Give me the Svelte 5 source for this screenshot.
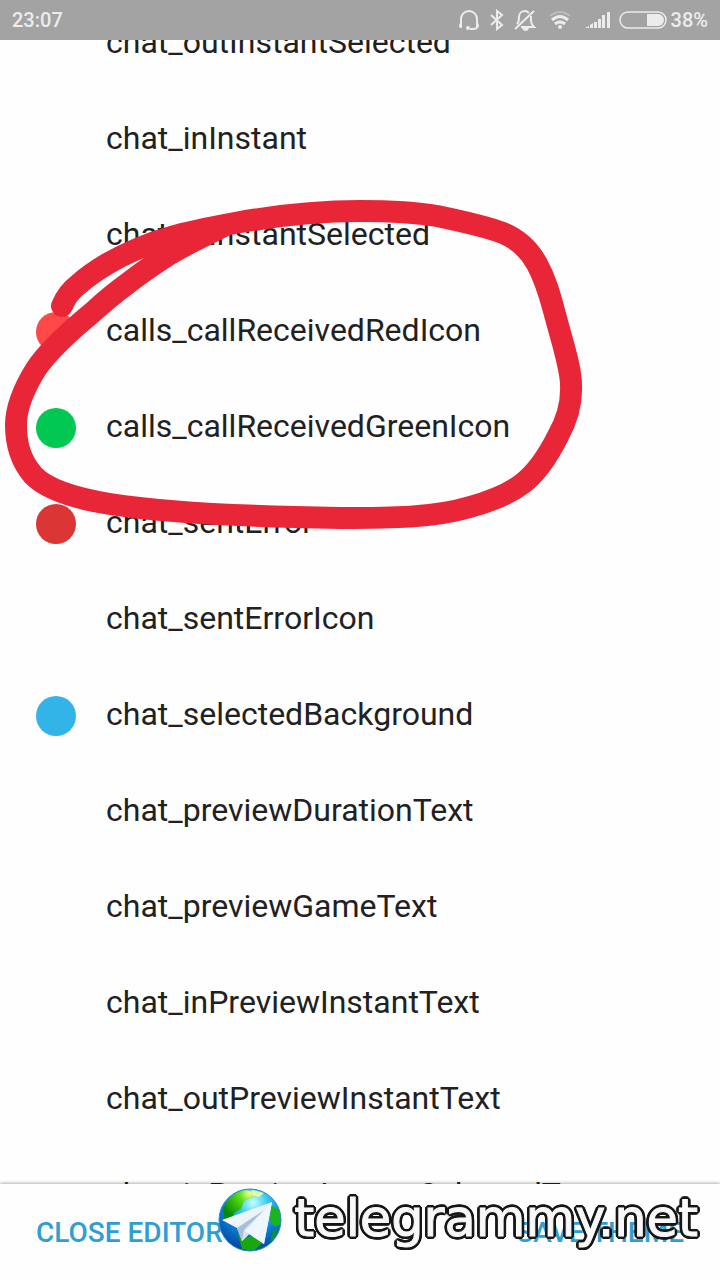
<script>
  const items = [
    { name: 'chat_outInstantSelected' },
    { name: 'chat_inInstant' },
    { name: 'chat_inInstantSelected' },
    { name: 'calls_callReceivedRedIcon', color: '#ff4848' },
    { name: 'calls_callReceivedGreenIcon', color: '#00c853' },
    { name: 'chat_sentError', color: '#db3535' },
    { name: 'chat_sentErrorIcon' },
    { name: 'chat_selectedBackground', color: '#33b4e8' },
    { name: 'chat_previewDurationText' },
    { name: 'chat_previewGameText' },
    { name: 'chat_inPreviewInstantText' },
    { name: 'chat_outPreviewInstantText' },
    { name: 'chat_inPreviewInstantSelectedText' }
  ];
</script>

<div class="screen">
  <header class="status">
    <span class="time">23:07</span>
    <div class="indicators">
      <svg width="22" height="22" viewBox="0 0 22 22" fill="none" stroke="#ececec" stroke-width="2" aria-hidden="true">
        <path d="M3 16V10a8 8 0 0 1 16 0v6M19 18c0 2-2 2-4 2h-3" />
        <path d="M1 17q0-3 3-4v6H2q-1-1-1-2zM21 17q0-3-3-4v6h2q1-1 1-2z" fill="#ececec" stroke="none" />
        <circle cx="10" cy="19" r="2" fill="#ececec" stroke="none" />
      </svg>
      <svg class="bluetooth" width="14" height="22" viewBox="0 0 14 22" fill="none" stroke="#ececec" stroke-width="2" aria-hidden="true">
        <path d="M1 6l11 10-5 4V2l5 4L1 16" />
      </svg>
      <svg class="bell" width="22" height="22" viewBox="0 0 22 22" fill="none" stroke="#ececec" stroke-width="2" aria-hidden="true">
        <path d="M3 15c2-2 2-4 2-7 0-4 3-6 6-6 2 0 3 1 4 2M17 7v5c0 3 1 4 3 6H7M1 20L20 2" />
        <path d="M8 19h7q-1 3-3.500 3T8 19z" fill="#ececec" stroke="none" />
      </svg>
      <svg class="wifi" width="22" height="20" viewBox="0 0 22 20" fill="none" stroke="#ececec" stroke-width="3" aria-hidden="true">
        <path d="M1 6q10-8 20 0" stroke="#bcbcbc" stroke-width="2" />
        <path d="M3 10q8-7 16 0M6 14q5-4 10 0" />
        <circle cx="11" cy="17" r="2" fill="#ececec" stroke="none" />
      </svg>
      <svg class="signal" width="26" height="18" viewBox="0 0 26 18" fill="#ececec" aria-hidden="true">
        <path d="M0 17l4-2v2zM5 14l3-2v5H5zM9 11h3v6H9zM13 8h3v9h-3zM17 4h3v13h-3zM22 1h3v16h-3z" />
      </svg>
      <svg class="battery" width="48" height="18" viewBox="0 0 48 18" aria-hidden="true">
        <rect x="1" y="1" width="46" height="16" rx="8" fill="none" stroke="#ececec" stroke-width="1.500" />
        <path d="M28 3h11a6 6 0 0 1 0 12H28z" fill="#ececec" />
      </svg>
      <span class="percent">38%</span>
    </div>
  </header>

  <main class="viewport">
    <ul>
      {#each items as item}
        <li>
          <button class="row">
            <span class="swatch" style:background={item.color ?? 'transparent'}></span>
            <span class="label">{item.name}</span>
          </button>
        </li>
      {/each}
    </ul>
  </main>

  <footer>
    <button class="action">CLOSE EDITOR</button>
    <button class="action">SAVE THEME</button>
    <div class="brand">
      <svg class="globe" width="64" height="64" viewBox="0 0 64 64" aria-hidden="true">
        <defs>
          <radialGradient id="sea" cx="55%" cy="22%" r="78%">
            <stop offset="0" stop-color="#c9ffff" />
            <stop offset=".3" stop-color="#35c8ef" />
            <stop offset=".65" stop-color="#087bd0" />
            <stop offset="1" stop-color="#0645a0" />
          </radialGradient>
          <radialGradient id="land" cx="80%" cy="10%" r="90%">
            <stop offset="0" stop-color="#f2ff9a" />
            <stop offset=".35" stop-color="#5cdd16" />
            <stop offset="1" stop-color="#058a0a" />
          </radialGradient>
          <linearGradient id="paper" x1="0" y1="0" x2="1" y2="1">
            <stop offset="0" stop-color="#ffffff" />
            <stop offset="1" stop-color="#d3e5f4" />
          </linearGradient>
          <clipPath id="disc"><circle cx="32" cy="32" r="31" /></clipPath>
        </defs>
        <circle cx="32" cy="32" r="31" fill="url(#sea)" />
        <g clip-path="url(#disc)">
          <path d="M5 20Q12 5 27 2l11 2-4 6-8 3-3 8-7 4-3 7-7 2z" fill="url(#land)" />
          <path d="M34 2l12 3-5 4-7-2z" fill="#e5ffa0" />
          <path d="M53 17l8 5 3 14-7 3-5-7z" fill="#19b51b" />
          <path d="M20 46l8 3 9-1 7 7-8 8-12-2z" fill="#16a80c" />
          <path d="M55 43l5-3-3 10-5 4z" fill="#129431" />
        </g>
        <circle cx="32" cy="32" r="31" fill="none" stroke="#268bd0" stroke-width="1" />
        <path d="M54 14L4 32l15 8 5 13 7-7 15 10z" fill="url(#paper)" />
        <path d="M48 21L19 40l5 13 2-11z" fill="#a9bfd6" />
        <path d="M54 14L26 42l-2 11 7-7z" fill="#d4e2f1" />
        <path d="M54 14L27 43l19 13z" fill="#eff7fe" />
      </svg>
      <span class="wordmark">telegrammy.net</span>
    </div>
  </footer>

  <svg class="scribble" width="600" height="540" viewBox="0 0 600 540" fill="none" aria-hidden="true">
    <path
      d="M62 306C66 296 71 290 79 284C88 276 97 270 107 264C128 252 149 243 171 237C191 231 213 227 235 223C279 215 320 211 360 211C387 211 414 212 437 216C461 221 485 226 503 233C520 240 530 251 537 264C547 282 551 300 556 318C562 341 571 368 571 385C572 405 567 420 558 436C549 454 538 472 522 484C506 496 488 502 470 507C433 518 391 518 340 518C270 517 175 514 110 504C79 499 48 491 33 475C21 461 16 446 16 425C16 404 26 385 36 369C48 351 70 331 93 312C105 301 116 292 127 284C138 275 150 267 162 259C174 251 186 245 198 239L224 226"
      stroke="#e92637" stroke-width="22" stroke-linecap="round" stroke-linejoin="round" />
  </svg>
</div>

<style>
  :global(body) {
    margin: 0;
  }
  .screen {
    position: relative;
    display: flex;
    flex-direction: column;
    height: 100vh;
    overflow: hidden;
    background: #fefefe;
    color: #212121;
    font-family: Roboto, sans-serif;
  }
  .status {
    display: flex;
    flex: none;
    align-items: center;
    justify-content: space-between;
    height: 40px;
    padding: 0 12px;
    background: #a3a3a3;
    color: #ececec;
    font-size: 20px;
    font-weight: 500;
  }
  .indicators {
    display: flex;
    align-items: center;
  }
  .bluetooth {
    margin-left: 10px;
  }
  .bell {
    margin-left: 10px;
  }
  .wifi {
    margin-left: 13px;
  }
  .signal {
    margin-left: 14px;
  }
  .battery {
    margin-left: 8px;
  }
  .percent {
    margin-left: 4px;
  }
  .viewport {
    flex: 1;
    min-height: 0;
    overflow: hidden;
  }
  ul {
    margin: -44px 0 0;
    padding: 0;
    list-style: none;
  }
  button {
    border: 0;
    background: none;
    font-family: inherit;
    cursor: pointer;
  }
  .row {
    display: flex;
    align-items: center;
    gap: 30px;
    width: 100%;
    height: 96px;
    padding: 0 36px;
    color: inherit;
    font-size: 32px;
    line-height: 40px;
    text-align: left;
  }
  .label {
    padding-bottom: 4px;
  }
  .swatch {
    flex: none;
    width: 40px;
    height: 40px;
    border-radius: 50%;
  }
  footer {
    position: relative;
    display: flex;
    flex: none;
    align-items: center;
    justify-content: space-between;
    height: 96px;
    padding: 0 36px;
    background: #fefefe;
    box-shadow: 0 -1px 3px rgba(0, 0, 0, 0.3);
  }
  .action {
    padding: 2px 0 0;
    color: #2f9fd2;
    font-size: 28px;
    font-weight: 500;
    line-height: 40px;
  }
  .brand {
    position: absolute;
    top: 4px;
    right: 22px;
    display: flex;
    align-items: center;
    gap: 12px;
    pointer-events: none;
  }
  .wordmark {
    color: #f8f8f8;
    font-family: "DejaVu Sans", sans-serif;
    font-size: 51px;
    line-height: 60px;
    padding-bottom: 2px;
    -webkit-text-stroke: 1px #f8f8f8;
    text-shadow:
      3px 0 #161616,
      -3px 0 #161616,
      0 3px #161616,
      0 -3px #161616,
      3px 1px #161616,
      3px -1px #161616,
      -3px 1px #161616,
      -3px -1px #161616,
      1px 3px #161616,
      1px -3px #161616,
      -1px 3px #161616,
      -1px -3px #161616,
      2px 2px #161616,
      2px -2px #161616,
      -2px 2px #161616,
      -2px -2px #161616;
  }
  .scribble {
    position: absolute;
    top: 0;
    left: 0;
    pointer-events: none;
  }
</style>
